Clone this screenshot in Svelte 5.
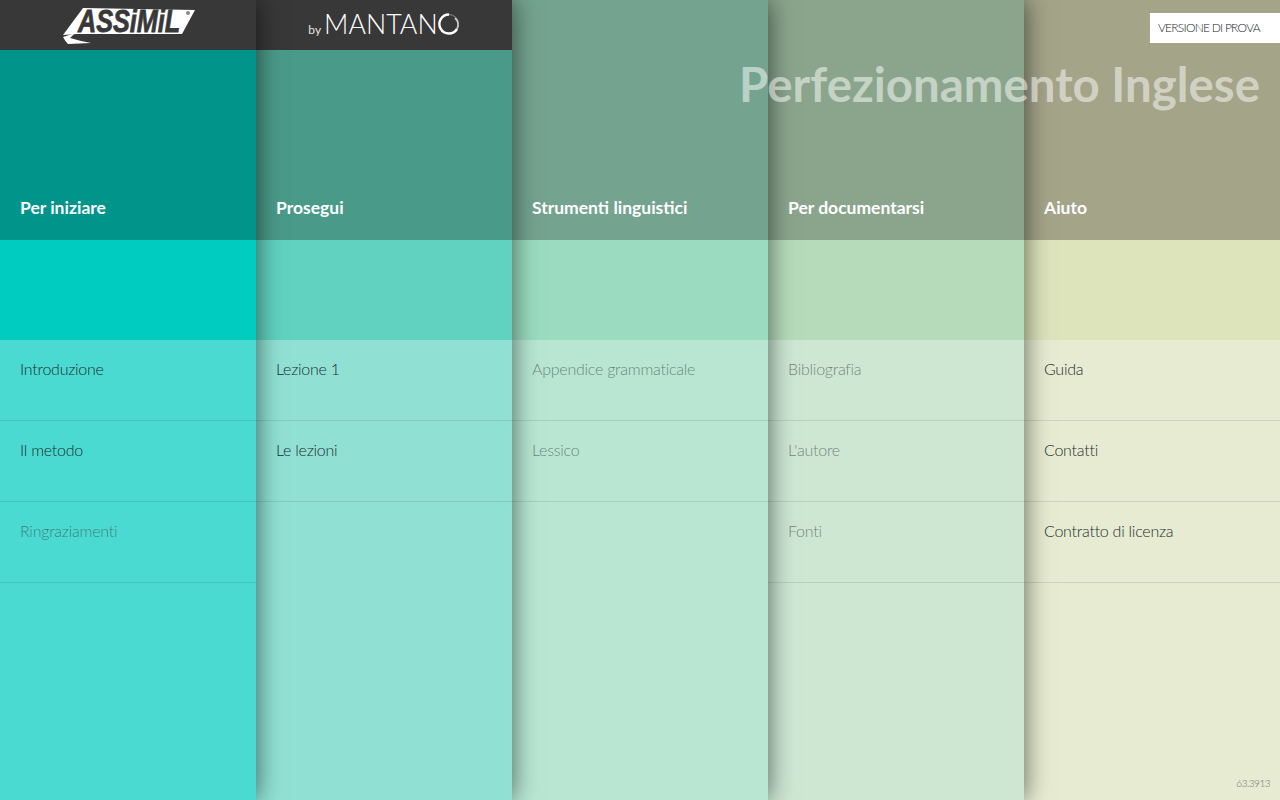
<script>
  const columns = [
    { title: "Per iniziare", tone: "c1", items: [["Introduzione"], ["Il metodo"], ["Ringraziamenti", true]] },
    { title: "Prosegui", tone: "c2", items: [["Lezione 1"], ["Le lezioni"]] },
    { title: "Strumenti linguistici", tone: "c3", items: [["Appendice grammaticale", true], ["Lessico", true]] },
    { title: "Per documentarsi", tone: "c4", items: [["Bibliografia", true], ["L'autore", true], ["Fonti", true]] },
    { title: "Aiuto", tone: "c5", items: [["Guida"], ["Contatti"], ["Contratto di licenza"]] },
  ];
</script>

<div class="page">
  {#each columns as col, i}
    <section class="col {col.tone}" style="z-index: {5 - i}">
      <header class="head">
        <div class="bar">
          {#if i === 0}
            <svg class="assimil" width="152" height="48" viewBox="0 -4 152 48">
              <path d="M3 30 L23 3 L135 5 L122 29 L17 29 Z" fill="#fff" />
              <path d="M3 32 L15 28 L10 33 Q20 36 31 38 L8 39 Q5 36 3 32 Z" fill="#fff" />
              <text x="18" y="27" class="logo-text" textLength="102" lengthAdjust="spacingAndGlyphs">ASSiMiL</text>
              <circle cx="128" cy="8" r="2" fill="#8a8a8a" />
            </svg>
          {:else if i === 1}
            <div class="mantano">
              <span class="by">by</span>
              <span class="brand">MANTAN</span>
              <svg width="22" height="22" viewBox="0 0 22 22">
                <circle cx="11" cy="11" r="9.5" fill="none" stroke="#8a8a8a" stroke-width="1" />
                <path d="M11 1.5 A9.5 9.5 0 1 0 19 16" fill="none" stroke="#fff" stroke-width="2.4" />
                <path d="M19 16 A9 9 0 0 0 17 5" fill="none" stroke="#c4c4c4" stroke-width="2" />
              </svg>
            </div>
          {/if}
        </div>
        <h2>{col.title}</h2>
      </header>
      <div class="band"></div>
      <ul>
        {#each col.items as [label, muted]}
          <li class:muted>{label}</li>
        {/each}
      </ul>
    </section>
  {/each}

  <h1>Perfezionamento Inglese</h1>
  <div class="trial">VERSIONE DI PROVA</div>
  <div class="build">63.3913</div>
</div>

<style>
  :global(body) {
    margin: 0;
  }

  .page {
    position: relative;
    display: flex;
    width: 1280px;
    height: 800px;
    overflow: hidden;
    font-family: Lato, "Liberation Sans", sans-serif;
  }

  .col {
    position: relative;
    display: flex;
    flex-direction: column;
    flex: 0 0 256px;
    height: 800px;
    box-shadow: 0 0 24px rgba(0, 0, 0, 0.6);
  }

  .c1 { background: #4bdad2; }
  .c2 { background: #90e1d4; }
  .c3 { background: #b8e6d3; }
  .c4 { background: #cde7d3; }
  .c5 { background: #e7ebd1; }

  .c1 .head { background: #00948a; }
  .c2 .head { background: #4a9a8a; }
  .c3 .head { background: #74a38f; }
  .c4 .head { background: #8ba58d; }
  .c5 .head { background: #a3a488; }

  .c1 .band { background: #00cdbf; }
  .c2 .band { background: #60d2bf; }
  .c3 .band { background: #9bdbbf; }
  .c4 .band { background: #b6dbbb; }
  .c5 .band { background: #dde3bb; }

  .head {
    display: flex;
    flex-direction: column;
    height: 240px;
  }

  .bar {
    display: flex;
    align-items: center;
    justify-content: center;
    height: 50px;
    flex: none;
  }

  .c1 .bar,
  .c2 .bar {
    background: #383838;
  }

  .assimil {
    display: block;
    margin-left: 16px;
  }

  .logo-text {
    font-family: "Liberation Sans", sans-serif;
    font-size: 31px;
    font-weight: 700;
    font-style: italic;
    fill: #383838;
    stroke: #383838;
    stroke-width: 0.8px;
  }

  .mantano {
    display: flex;
    align-items: baseline;
    margin-bottom: 3px;
    color: #fff;
  }

  .by {
    font-size: 12px;
    margin-right: 3px;
    color: #e4e4e4;
  }

  .brand {
    font-size: 26.8px;
    font-weight: 300;
  }

  .mantano svg {
    align-self: center;
  }

  h2 {
    margin: auto 0 21px;
    padding-left: 20px;
    font-size: 17.5px;
    line-height: 22px;
    font-weight: 700;
    color: #fff;
  }

  .band {
    height: 100px;
    flex: none;
  }

  ul {
    list-style: none;
    margin: 0;
    padding: 0;
  }

  li {
    padding: 19px 20px 0;
    height: 61px;
    border-bottom: 1px solid rgba(0, 60, 60, 0.12);
    font-size: 16px;
    font-weight: 300;
    letter-spacing: -0.25px;
    line-height: 20px;
    color: #1c2f2d;
  }

  li.muted {
    color: rgba(50, 60, 60, 0.6);
  }

  h1 {
    position: absolute;
    z-index: 10;
    top: 54px;
    right: 20px;
    margin: 0;
    font-size: 47.4px;
    line-height: 60px;
    font-weight: 700;
    color: rgba(255, 255, 255, 0.5);
    white-space: nowrap;
  }

  .trial {
    position: absolute;
    z-index: 10;
    top: 13px;
    right: 0;
    width: 130px;
    height: 30px;
    box-sizing: border-box;
    padding-left: 8px;
    background: #fff;
    font-size: 12px;
    font-weight: 300;
    letter-spacing: -0.75px;
    line-height: 30px;
    color: #222;
  }

  .build {
    position: absolute;
    z-index: 10;
    right: 10px;
    bottom: 11px;
    font-size: 10px;
    font-weight: 300;
    letter-spacing: -0.5px;
    line-height: 12px;
    color: #6f7268;
  }
</style>
